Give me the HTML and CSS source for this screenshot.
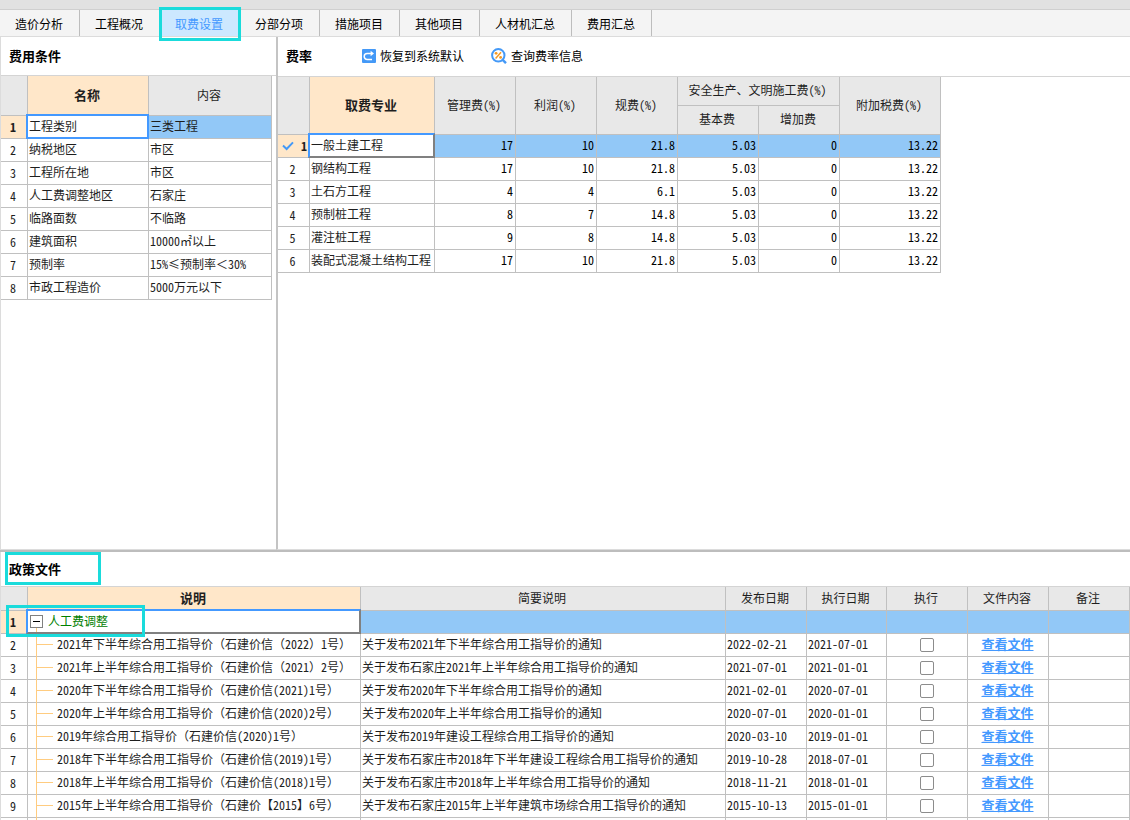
FILE: index.html
```html
<!DOCTYPE html>
<html lang="zh-CN">
<head>
<meta charset="utf-8">
<title>取费设置</title>
<link rel="stylesheet" href="styles.css">
</head>
<body>
<div class="app">
  <div class="topbar"></div>
  <nav class="tabs">
    <button class="tab" type="button">造价分析</button>
    <button class="tab" type="button">工程概况</button>
    <button class="tab tab-active" type="button">取费设置</button>
    <button class="tab" type="button">分部分项</button>
    <button class="tab" type="button">措施项目</button>
    <button class="tab" type="button">其他项目</button>
    <button class="tab" type="button">人材机汇总</button>
    <button class="tab" type="button">费用汇总</button>
  </nav>

  <main class="upper">
    <section class="pane conditions">
      <header class="pane-head"><h2>费用条件</h2></header>
      <table class="grid cond-grid">
        <colgroup><col class="w-no"><col class="w-name"><col></colgroup>
        <thead><tr><th></th><th class="hot">名称</th><th>内容</th></tr></thead>
        <tbody>
          <tr class="selected"><th>1</th><td class="focus focus-blue">工程类别</td><td>三类工程</td></tr>
          <tr><th>2</th><td>纳税地区</td><td>市区</td></tr>
          <tr><th>3</th><td>工程所在地</td><td>市区</td></tr>
          <tr><th>4</th><td>人工费调整地区</td><td>石家庄</td></tr>
          <tr><th>5</th><td>临路面数</td><td>不临路</td></tr>
          <tr><th>6</th><td>建筑面积</td><td>10000<span class="fw">㎡</span>以上</td></tr>
          <tr><th>7</th><td>预制率</td><td>15%<span class="fw">≤</span>预制率<span class="fw">＜</span>30%</td></tr>
          <tr><th>8</th><td>市政工程造价</td><td>5000万元以下</td></tr>
        </tbody>
      </table>
    </section>

    <section class="pane rates">
      <header class="pane-head">
        <h2>费率</h2>
        <button class="tool" type="button">
          <svg width="14" height="14" viewBox="0 0 14 14"><rect width="14" height="14" rx="1" fill="#4499f7"/><path d="M10 4.5H5.2a2.7 2.7 0 0 0 0 6H10" fill="none" stroke="#fff" stroke-width="1.5"/><path d="M8.6 1.8 12 4.5 8.6 7.2z" fill="#fff"/></svg>
          恢复到系统默认
        </button>
        <button class="tool" type="button">
          <svg width="16" height="16" viewBox="0 0 16 16"><circle cx="7.3" cy="7.3" r="6.2" fill="#fff" stroke="#4499f7" stroke-width="2"/><path d="M11.4 11.6 15 15.2" stroke="#4499f7" stroke-width="2.4"/><path d="M10 4.2 4.6 10.4" stroke="#f59a23" stroke-width="1.5"/><circle cx="5.1" cy="5.3" r="1.4" fill="#f59a23"/><circle cx="9.6" cy="9.4" r="1.4" fill="#f59a23"/></svg>
          查询费率信息
        </button>
      </header>
      <table class="grid rate-grid">
        <colgroup><col class="w-mark"><col class="w-major"><col class="w-num"><col class="w-num"><col class="w-num"><col class="w-num"><col class="w-num"><col class="w-tax"></colgroup>
        <thead>
          <tr><th rowspan="2"></th><th rowspan="2" class="hot">取费专业</th><th rowspan="2">管理费(%)</th><th rowspan="2">利润(%)</th><th rowspan="2">规费(%)</th><th colspan="2">安全生产、文明施工费(%)</th><th rowspan="2">附加税费(%)</th></tr>
          <tr><th>基本费</th><th>增加费</th></tr>
        </thead>
        <tbody>
          <tr class="selected"><th><span class="mark"><svg width="12" height="10" viewBox="0 0 12 10"><path d="M1 4.6 4.6 8 11 1.4" fill="none" stroke="#4499f7" stroke-width="2"/></svg>1</span></th><td class="focus">一般土建工程</td><td>17</td><td>10</td><td>21.8</td><td>5.03</td><td>0</td><td>13.22</td></tr>
          <tr><th>2</th><td>钢结构工程</td><td>17</td><td>10</td><td>21.8</td><td>5.03</td><td>0</td><td>13.22</td></tr>
          <tr><th>3</th><td>土石方工程</td><td>4</td><td>4</td><td>6.1</td><td>5.03</td><td>0</td><td>13.22</td></tr>
          <tr><th>4</th><td>预制桩工程</td><td>8</td><td>7</td><td>14.8</td><td>5.03</td><td>0</td><td>13.22</td></tr>
          <tr><th>5</th><td>灌注桩工程</td><td>9</td><td>8</td><td>14.8</td><td>5.03</td><td>0</td><td>13.22</td></tr>
          <tr><th>6</th><td>装配式混凝土结构工程</td><td>17</td><td>10</td><td>21.8</td><td>5.03</td><td>0</td><td>13.22</td></tr>
        </tbody>
      </table>
    </section>
  </main>

  <section class="pane policies">
    <header class="pane-head"><h2 class="callout callout-title">政策文件</h2></header>
    <table class="grid policy-grid">
      <colgroup><col class="w-no"><col class="w-desc"><col><col class="w-num"><col class="w-exec"><col class="w-num"><col class="w-num"><col class="w-num"></colgroup>
      <thead><tr><th></th><th class="hot">说明</th><th>简要说明</th><th>发布日期</th><th>执行日期</th><th>执行</th><th>文件内容</th><th>备注</th></tr></thead>
      <tbody>
        <tr class="selected"><th class="callout callout-row">1</th><td class="focus group"><span class="group-label"><button class="toggle" type="button" aria-label="折叠"></button>人工费调整</span></td><td></td><td></td><td></td><td></td><td></td><td></td></tr>
        <tr><th>2</th><td class="leaf">2021年下半年综合用工指导价<span class="fw">（</span>石建价信<span class="fw">（</span>2022<span class="fw">）</span>1号<span class="fw">）</span></td><td>关于发布2021年下半年综合用工指导价的通知</td><td>2022-02-21</td><td>2021-07-01</td><td><input type="checkbox" aria-label="执行 2"></td><td><a href="#">查看文件</a></td><td></td></tr>
        <tr><th>3</th><td class="leaf">2021年上半年综合用工指导价<span class="fw">（</span>石建价信<span class="fw">（</span>2021<span class="fw">）</span>2号<span class="fw">）</span></td><td>关于发布石家庄2021年上半年综合用工指导价的通知</td><td>2021-07-01</td><td>2021-01-01</td><td><input type="checkbox" aria-label="执行 3"></td><td><a href="#">查看文件</a></td><td></td></tr>
        <tr><th>4</th><td class="leaf">2020年下半年综合用工指导价<span class="fw">（</span>石建价信(2021)1号<span class="fw">）</span></td><td>关于发布2020年下半年综合用工指导价的通知</td><td>2021-02-01</td><td>2020-07-01</td><td><input type="checkbox" aria-label="执行 4"></td><td><a href="#">查看文件</a></td><td></td></tr>
        <tr><th>5</th><td class="leaf">2020年上半年综合用工指导价<span class="fw">（</span>石建价信(2020)2号<span class="fw">）</span></td><td>关于发布2020年上半年综合用工指导价的通知</td><td>2020-07-01</td><td>2020-01-01</td><td><input type="checkbox" aria-label="执行 5"></td><td><a href="#">查看文件</a></td><td></td></tr>
        <tr><th>6</th><td class="leaf">2019年综合用工指导价<span class="fw">（</span>石建价信(2020)1号<span class="fw">）</span></td><td>关于发布2019年建设工程综合用工指导价的通知</td><td>2020-03-10</td><td>2019-01-01</td><td><input type="checkbox" aria-label="执行 6"></td><td><a href="#">查看文件</a></td><td></td></tr>
        <tr><th>7</th><td class="leaf">2018年下半年综合用工指导价<span class="fw">（</span>石建价信(2019)1号<span class="fw">）</span></td><td>关于发布石家庄市2018年下半年建设工程综合用工指导价的通知</td><td>2019-10-28</td><td>2018-07-01</td><td><input type="checkbox" aria-label="执行 7"></td><td><a href="#">查看文件</a></td><td></td></tr>
        <tr><th>8</th><td class="leaf">2018年上半年综合用工指导价<span class="fw">（</span>石建价信(2018)1号<span class="fw">）</span></td><td>关于发布石家庄市2018年上半年综合用工指导价的通知</td><td>2018-11-21</td><td>2018-01-01</td><td><input type="checkbox" aria-label="执行 8"></td><td><a href="#">查看文件</a></td><td></td></tr>
        <tr><th>9</th><td class="leaf">2015年上半年综合用工指导价<span class="fw">（</span>石建价<span class="fw">【</span>2015<span class="fw">】</span>6号<span class="fw">）</span></td><td>关于发布石家庄2015年上半年建筑市场综合用工指导价的通知</td><td>2015-10-13</td><td>2015-01-01</td><td><input type="checkbox" aria-label="执行 9"></td><td><a href="#">查看文件</a></td><td></td></tr>
        <tr><th></th><td class="trunk"></td><td></td><td></td><td></td><td></td><td></td><td></td></tr>
      </tbody>
    </table>
  </section>
</div>
</body>
</html>
```
FILE: styles.css
```css
*,
*::before,
*::after { box-sizing: border-box; }

body {
  margin: 0;
  background: #fff;
  color: #1e1e1e;
  font: 12px/16px "Noto Sans CJK SC", sans-serif;
}

button {
  font: inherit;
  color: inherit;
  padding: 0;
  border: 0;
  background: none;
}

.app {
  display: flex;
  flex-direction: column;
  height: 100vh;
  overflow: hidden;
}

/* Tabs */
.topbar {
  flex: none;
  height: 10px;
  background: #e1e1e1;
  border-bottom: 1px solid #cfcfcf;
}
.tabs {
  flex: none;
  display: flex;
  height: 27px;
  background: #f4f4f4;
  border-bottom: 1px solid #dcdcdc;
}
.tab {
  position: relative;
  padding: 2px 16px 0 15px;
  border-right: 1px solid #bdbdbd;
  color: #000;
}
.tab-active {
  background: #cce8ff;
  color: #4499ff;
}
.tab-active::after,
.callout::after {
  content: "";
  position: absolute;
  z-index: 2;
  border: 3px solid #1adbdb;
  pointer-events: none;
}
.tab-active::after { inset: -3px -2px -5px -1px; }

/* Panes */
.upper {
  flex: 1;
  display: flex;
  min-height: 0;
  border-bottom: 2px solid #bdbdbd;
}
.pane { border-left: 1px solid #dcdcdc; }
.upper .pane { border-bottom: 1px solid #dcdcdc; }
.conditions {
  flex: none;
  width: 276px;
}
.upper .rates {
  flex: 1;
  border-left: 2px solid #c4c4c4;
}
.policies {
  flex: none;
  height: 268px;
}
.pane-head {
  display: flex;
  align-items: center;
  height: 39px;
  padding-left: 8px;
  border-bottom: 1px solid #d4d4d4;
  color: #000;
}
.rates .pane-head {
  height: 40px;
  padding-bottom: 2px;
}
.policies .pane-head { height: 35px; }
h2 {
  margin: 0;
  font-size: 13px;
  line-height: 16px;
}
.tool {
  display: flex;
  align-items: center;
  gap: 4px;
  margin-left: 27px;
}
h2 + .tool { margin-left: 50px; }

.callout { position: relative; }
.callout-title::after { inset: -9px -40px -8px -4px; }
.callout-row::after {
  top: -6px;
  left: 5px;
  width: 139px;
  height: 32px;
  z-index: 3;
}

/* Data grids */
.grid {
  table-layout: fixed;
  border-spacing: 0;
  font-feature-settings: "hwid";
}
.fw { font-feature-settings: normal; }
.cond-grid { width: 271px; }
.rate-grid { width: 663px; }
.policy-grid { width: 100%; }
.w-no { width: 27px; }
.w-name { width: 121px; }
.w-mark { width: 32px; }
.w-major { width: 125px; }
.w-num { width: 81px; }
.w-exec { width: 80px; }
.w-tax { width: 101px; }
.w-desc { width: 333px; }

.grid th,
.grid td {
  height: 23px;
  padding: 0 2px 2px 1px;
  border-right: 1px solid #c0c0c0;
  border-bottom: 1px solid #c0c0c0;
  font-weight: 400;
  white-space: nowrap;
}
.grid td { text-align: left; }
.grid th {
  padding-left: 0;
  text-align: center;
}
.grid thead th { background: #e8e8e8; }
.grid tbody th { padding-bottom: 0; }
.grid thead .hot {
  background: #ffe7c9;
  font-size: 13px;
  font-weight: 700;
}
.cond-grid thead th { height: 40px; }
.rate-grid thead th { height: 29px; }
.policy-grid thead th { height: 24px; }

.grid .selected td { background: #92c8f7; }
.grid .selected th {
  background: #ffe7c9;
  font-weight: 700;
}
.grid .selected .focus {
  position: relative;
  background: #fff;
}
.focus::after {
  content: "";
  position: absolute;
  inset: -2px -1px -1px -2px;
  border: 2px solid;
  border-color: #4499ff #808080 #808080 #4499ff;
  pointer-events: none;
}
.focus-blue::after { border-color: #4499ff; }

.rate-grid td:nth-child(n+3) {
  color: #000;
  text-align: right;
}
.mark {
  display: flex;
  align-items: center;
  justify-content: space-between;
  padding-left: 4px;
}

/* Policy tree */
.leaf,
.trunk,
.group { position: relative; }
.grid .leaf { padding-left: 29px; }
.grid .group { padding-left: 2px; }
.leaf::before,
.trunk::before,
.group::before {
  content: "";
  position: absolute;
  top: 0;
  bottom: -1px;
  left: 8px;
  border-left: 1px solid #ffcc80;
}
.group::before { top: 17px; }
.leaf::after {
  content: "";
  position: absolute;
  top: 10px;
  left: 8px;
  width: 17px;
  border-top: 1px solid #ffcc80;
}
.group-label {
  display: flex;
  align-items: center;
  gap: 5px;
  color: #008000;
}
.toggle {
  display: grid;
  place-items: center;
  width: 13px;
  height: 13px;
  border: 1px solid #808080;
  background: #fff;
}
.toggle::before {
  content: "";
  width: 7px;
  height: 1px;
  background: #000;
}

.policy-grid td:nth-child(n+6) { text-align: center; }
input[type="checkbox"] {
  appearance: none;
  display: block;
  width: 14px;
  height: 14px;
  margin: 1px auto 0;
  border: 1px solid #8c8c8c;
  border-radius: 2px;
  background: #fff;
}
a {
  color: #4499ff;
  font-size: 13px;
  font-weight: 700;
}
```
